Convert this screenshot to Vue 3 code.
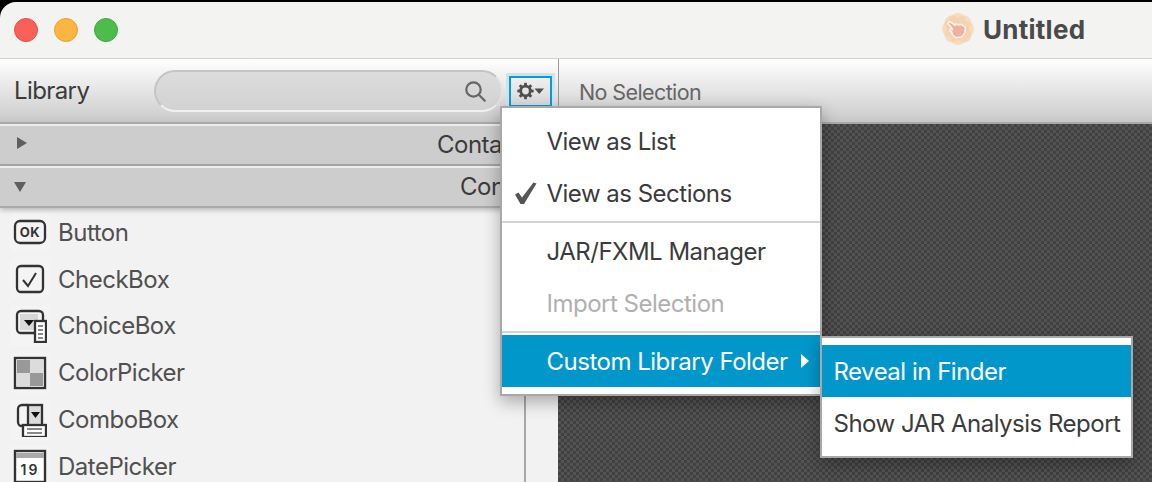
<script setup>
const items = [
  { name: 'Button', icon: 'ok' },
  { name: 'CheckBox', icon: 'check' },
  { name: 'ChoiceBox', icon: 'choice' },
  { name: 'ColorPicker', icon: 'color' },
  { name: 'ComboBox', icon: 'combo' },
  { name: 'DatePicker', icon: 'date' },
]
const teeth = [0, 45, 90, 135, 180, 225, 270, 315]
</script>

<template>
  <div class="win">
    <header class="titlebar">
      <div class="lights">
        <span class="light red"></span>
        <span class="light yellow"></span>
        <span class="light green"></span>
      </div>
      <div class="title">
        <svg class="logo" width="34" height="34" viewBox="0 0 34 34">
          <circle cx="17" cy="17" r="11" fill="#f6cfa8"/>
          <circle cx="17" cy="9" r="8" fill="#f8dcbc"/>
          <circle cx="17" cy="25" r="8" fill="#f8dcbc"/>
          <circle cx="9" cy="17" r="8" fill="#f8dcbc"/>
          <circle cx="25" cy="17" r="8" fill="#f8dcbc"/>
          <circle cx="11" cy="11" r="7.500" fill="#f5cfae" opacity=".8"/>
          <circle cx="23" cy="23" r="7.500" fill="#f5cfae" opacity=".8"/>
          <circle cx="23" cy="11" r="7.500" fill="#f5cfae" opacity=".6"/>
          <circle cx="11" cy="23" r="7.500" fill="#f5cfae" opacity=".6"/>
          <path d="M7 11.500c0-1.500 2-2.200 3-1.200l4 3 1-1.300 3 1 1-.8 3 1.300 2.500 2-1 6-3 3.500-6 .5-3-3-1-3-2-.5 1-2 2 .5-1.500-2.500z" fill="#eeb1a2" stroke="#fdf3ea" stroke-width="1.500" stroke-linejoin="round"/>
        </svg>
        <span>Untitled</span>
      </div>
    </header>

    <div class="toolbar">
      <div class="tool-left">
        <span class="lib">Library</span>
        <div class="search">
          <svg width="24" height="24" viewBox="0 0 24 24" fill="none" stroke="#666" stroke-width="2.200">
            <circle cx="10.500" cy="10.500" r="7.200"/>
            <path d="M15.800 15.800l6 6" stroke-linecap="round"/>
          </svg>
        </div>
        <div class="gear">
          <svg width="28" height="18" viewBox="0 0 28 18">
            <circle cx="8.500" cy="9" r="4.800" fill="none" stroke="#4f4f4f" stroke-width="2.800"/>
            <path v-for="a in teeth" :key="a" d="M8.500 .8v3" stroke="#4f4f4f" stroke-width="2.800" :transform="`rotate(${a} 8.500 9)`"/>
            <path d="M17.500 6.500h9.500l-4.750 5.500z" fill="#4f4f4f"/>
          </svg>
        </div>
      </div>
      <div class="tool-right">No Selection</div>
    </div>

    <div class="body">
      <aside class="side">
        <div class="panel">
          <div class="sec">
            <span class="tri right"></span>
            <span class="sec-label">Containers</span>
          </div>
          <div class="sec open">
            <span class="tri down"></span>
            <span class="sec-label two">Controls</span>
          </div>
          <ul class="list">
            <li v-for="it in items" :key="it.name" class="row">
              <span class="ico">
                <svg width="34" height="34" viewBox="0 0 34 34" fill="none" stroke="#333" stroke-width="2.300">
                  <template v-if="it.icon === 'ok'">
                    <rect x="2" y="6" width="30" height="22" rx="5"/>
                    <text x="17" y="22" text-anchor="middle" class="ok">OK</text>
                  </template>
                  <template v-else-if="it.icon === 'check'">
                    <rect x="4" y="4" width="26" height="26" rx="4"/>
                    <path d="M10 18l5 6 8-13" stroke-width="2"/>
                  </template>
                  <template v-else-if="it.icon === 'choice'">
                    <rect x="4" y="2" width="26" height="22" rx="4"/>
                    <rect x="7" y="5" width="18" height="16" fill="#d8d8d8" stroke="none"/>
                    <path d="M11 11h10l-5 6z" fill="#111" stroke="none"/>
                    <rect x="22" y="12" width="11" height="21" fill="#fff"/>
                    <path d="M25 17h5M25 21h5M25 25h5M25 29h5" stroke="#888" stroke-width="2"/>
                  </template>
                  <template v-else-if="it.icon === 'color'">
                    <rect x="2" y="2" width="30" height="30" stroke-width="2.400" fill="#fff"/>
                    <rect x="4" y="4" width="13" height="13" fill="#999" stroke="none"/>
                    <rect x="17" y="4" width="13" height="13" fill="#dcdcdc" stroke="none"/>
                    <rect x="4" y="17" width="13" height="13" fill="#dcdcdc" stroke="none"/>
                    <rect x="17" y="17" width="13" height="13" fill="#999" stroke="none"/>
                  </template>
                  <template v-else-if="it.icon === 'combo'">
                    <path d="M15 2H9a4 4 0 0 0-4 4v13a4 4 0 0 0 4 4h6"/>
                    <rect x="15" y="2" width="14" height="22" fill="#dcdcdc"/>
                    <path d="M18 9h9l-4.500 6z" fill="#111" stroke="none"/>
                    <rect x="10" y="22" width="23" height="12" fill="#fff"/>
                    <path d="M14 26h15M14 30h15" stroke="#888" stroke-width="2"/>
                  </template>
                  <template v-else>
                    <rect x="2" y="2" width="30" height="31" fill="#fff" stroke-width="2.400"/>
                    <rect x="3" y="4" width="28" height="5" fill="#aaa" stroke="none"/>
                    <text x="17" y="26" text-anchor="middle" class="cal">19</text>
                  </template>
                </svg>
              </span>
              <span class="name">{{ it.name }}</span>
            </li>
          </ul>
        </div>
        <div class="gutter"></div>
      </aside>
      <main class="canvas"></main>
    </div>

    <div class="menu">
      <div class="mi">View as List</div>
      <div class="mi">
        <svg class="tick" width="26" height="26" viewBox="0 0 26 26">
          <path d="M2 14.500l3.500-2 3.500 5L20.500 2.500l3 1L11 24H7.500z" fill="#555"/>
        </svg>
        View as Sections
      </div>
      <div class="sep"></div>
      <div class="mi">JAR/FXML Manager</div>
      <div class="mi off">Import Selection</div>
      <div class="sep"></div>
      <div class="mi sel">Custom Library Folder<span class="arrow"></span></div>
    </div>
    <div class="menu sub">
      <div class="si sel">Reveal in Finder</div>
      <div class="si">Show JAR Analysis Report</div>
    </div>
  </div>
</template>

<style>
html, body { margin: 0; background: #000; }
</style>

<style scoped>
.win {
  position: relative;
  width: 1152px;
  height: 482px;
  overflow: hidden;
  font-family: Inter, "Liberation Sans", sans-serif;
  font-size: 24px;
  letter-spacing: -.5px;
  color: #3b3b3b;
  background: #000;
}
.titlebar {
  height: 56px;
  margin-top: 2px;
  background: #f3f3f1;
  border-bottom: 1px solid #d2d2d2;
  display: flex;
  align-items: center;
  position: relative;
  border-top-left-radius: 16px;
}
.lights { display: flex; gap: 16px; margin-left: 14px; }
.light { width: 24px; height: 24px; border-radius: 50%; box-sizing: border-box; }
.red { background: #f96057; border: 1px solid #e0534a; }
.yellow { background: #fbb63f; border: 1px solid #e5a236; }
.green { background: #4cbc4b; border: 1px solid #44a844; }
.title {
  position: absolute;
  left: 941px;
  top: 10px;
  display: flex;
  align-items: center;
  gap: 8px;
  font-weight: 700;
  font-size: 26px;
  letter-spacing: .25px;
  color: #4a4a4a;
}
.toolbar {
  height: 63px;
  display: flex;
  background: linear-gradient(#fff, #d0d0d0 90%, #c6c6c6);
  border-bottom: 2px solid #a9a9a9;
}
.tool-left {
  width: 559px;
  box-sizing: border-box;
  border-right: 1px solid #999;
  display: flex;
  align-items: center;
  padding-left: 14px;
  flex: none;
}
.lib { width: 140px; font-size: 24px; letter-spacing: -.6px; color: #3a3a3a; }
.search {
  width: 349px;
  height: 42px;
  box-sizing: border-box;
  border: 2px solid #c4c4c4;
  border-bottom-color: #f0f0f0;
  border-right-color: #e2e2e2;
  border-radius: 21px;
  background: linear-gradient(#dcdcdc, #d2d2d2);
  display: flex;
  align-items: center;
  justify-content: flex-end;
  padding-right: 14px;
  flex: none;
}
.gear {
  margin-left: 6px;
  width: 43px;
  height: 31px;
  margin-top: 1px;
  box-sizing: border-box;
  border: 2px solid #0a9bd6;
  box-shadow: 0 0 0 3px #cfe3ea;
  display: flex;
  align-items: center;
  justify-content: center;
  flex: none;
}
.tool-right {
  padding-left: 20px;
  padding-top: 20px;
  font-size: 21.500px;
  letter-spacing: -.6px;
  color: #666;
}
.body { display: flex; height: 358px; }
.side { width: 558px; display: flex; flex: none; }
.panel {
  width: 526px;
  box-sizing: border-box;
  border-right: 2px solid #a8a8a8;
  background: #f2f2f2;
  overflow: hidden;
}
.gutter { flex: 1; background: #f2f2f2; }
.sec {
  height: 42px;
  box-sizing: border-box;
  background: #cdcdcd;
  border-top: 2px solid #ededed;
  border-bottom: 2px solid #a9a9a9;
  position: relative;
  display: flex;
  align-items: center;
  padding-left: 437px;
  padding-bottom: 2px;
  color: #3b3b3b;
}
.sec.open { box-shadow: 0 2px 5px rgba(0,0,0,.25); padding-left: 460px; }
.sec-label { white-space: nowrap; }
.tri { position: absolute; width: 0; height: 0; }
.tri.right {
  left: 17px; top: 11px;
  border-left: 10px solid #5f5f5f;
  border-top: 6px solid transparent;
  border-bottom: 6px solid transparent;
}
.tri.down {
  left: 14px; top: 14px;
  border-top: 10px solid #5f5f5f;
  border-left: 6px solid transparent;
  border-right: 6px solid transparent;
}
.list { list-style: none; margin: 0; padding: 1px 0 0; }
.row {
  height: 46.800px;
  display: flex;
  align-items: center;
  padding-left: 10px;
  gap: 8px;
  color: #505050;
}
.ico {
  width: 40px;
  height: 40px;
  display: flex;
  align-items: center;
  justify-content: center;
  background: #f4f4f4;
  border-radius: 4px;
}
.ico svg { display: block; }
.ok { font: 700 13px Inter, sans-serif; fill: #333; stroke: none; letter-spacing: .5px; }
.cal { font: 600 14px Inter, sans-serif; fill: #333; stroke: none; letter-spacing: 2px; }
.canvas {
  flex: 1;
  background-color: #4a4a4a;
  background-image: repeating-conic-gradient(#535353 0 25%, #414141 0 50%);
  background-size: 6px 6px;
}
.menu {
  position: absolute;
  left: 500px;
  top: 106px;
  width: 322px;
  height: 290px;
  box-sizing: border-box;
  background: #fff;
  border: 2px solid #a8a8a8;
  box-shadow: 0 6px 16px rgba(0,0,0,.3);
  padding-top: 7px;
  color: #3b3b3b;
}
.mi {
  height: 52px;
  display: flex;
  align-items: center;
  padding-left: 44.500px;
  position: relative;
  white-space: nowrap;
}
.mi.off { color: #b0b0b0; }
.mi.sel { background: #0297cb; color: #fff; }
.sep { height: 2px; margin: 2px 0; background: #d4d4d4; }
.tick { position: absolute; left: 11px; top: 13px; }
.arrow {
  margin-left: 13px;
  border-left: 8px solid #fff;
  border-top: 7px solid transparent;
  border-bottom: 7px solid transparent;
}
.menu.sub {
  left: 820px;
  top: 336px;
  width: 313px;
  height: 122px;
}
.si {
  height: 52px;
  display: flex;
  align-items: center;
  padding-left: 11.500px;
  white-space: nowrap;
}
.si.sel { background: #0297cb; color: #fff; }
</style>
